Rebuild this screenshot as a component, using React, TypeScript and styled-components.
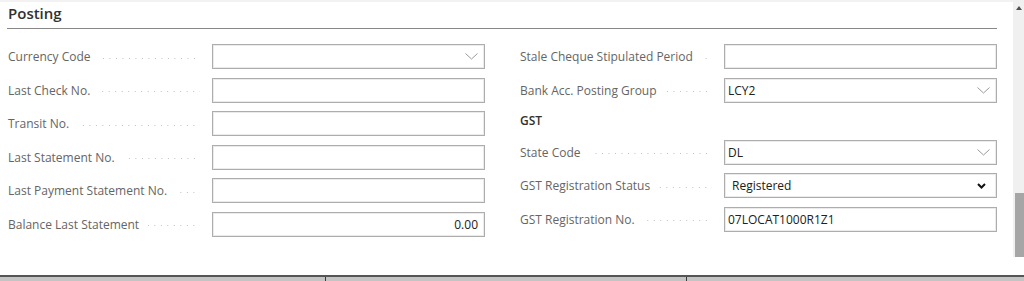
import React from 'react'
import styled, { createGlobalStyle } from 'styled-components'

type Field = {
  label: string
  value?: string
  kind?: 'text' | 'lookup' | 'select'
  align?: 'left' | 'right'
}

const leftFields: Field[] = [
  { label: 'Currency Code', kind: 'lookup' },
  { label: 'Last Check No.' },
  { label: 'Transit No.' },
  { label: 'Last Statement No.' },
  { label: 'Last Payment Statement No.' },
  { label: 'Balance Last Statement', value: '0.00', align: 'right' },
]

const rightTop: Field[] = [
  { label: 'Stale Cheque Stipulated Period' },
  { label: 'Bank Acc. Posting Group', value: 'LCY2', kind: 'lookup' },
]

const rightGst: Field[] = [
  { label: 'State Code', value: 'DL', kind: 'lookup' },
  { label: 'GST Registration Status', value: 'Registered', kind: 'select' },
  { label: 'GST Registration No.', value: '07LOCAT1000R1Z1' },
]

const GlobalStyle = createGlobalStyle`
  html, body {
    margin: 0;
    padding: 0;
    background: #ffffff;
  }
  body {
    font-family: "Open Sans", "Noto Sans", sans-serif;
    color: #323130;
  }
`

const LookupChevron = () => (
  <svg width="13" height="7" viewBox="0 0 13 7">
    <polyline points="0.5,0.5 6.5,6 12.5,0.5" fill="none" stroke="#9a9a9a" strokeWidth="1" />
  </svg>
)

const SelectChevron = () => (
  <svg width="9" height="6" viewBox="0 0 9 6">
    <polyline points="1,1 4.5,4.5 8,1" fill="none" stroke="#111" strokeWidth="2" />
  </svg>
)

const FieldRow = ({ field }: { field: Field }) => (
  <StyledRow>
    <StyledLabel>
      <span>{field.label}</span>
      <StyledLeader />
    </StyledLabel>
    <StyledInput $align={field.align} $select={field.kind === 'select'}>
      <StyledValue>{field.value}</StyledValue>
      {field.kind === 'lookup' && <LookupChevron />}
      {field.kind === 'select' && <SelectChevron />}
    </StyledInput>
  </StyledRow>
)

export default function App() {
  return (
    <>
      <GlobalStyle />
      <StyledPage>
        <StyledBody>
          <StyledContent>
            <StyledHeader>Posting</StyledHeader>
            <StyledColumns>
              <StyledColumn>
                {leftFields.map((f) => (
                  <FieldRow key={f.label} field={f} />
                ))}
              </StyledColumn>
              <StyledColumn>
                {rightTop.map((f) => (
                  <FieldRow key={f.label} field={f} />
                ))}
                <StyledGroupTitle>GST</StyledGroupTitle>
                {rightGst.map((f) => (
                  <FieldRow key={f.label} field={f} />
                ))}
              </StyledColumn>
            </StyledColumns>
          </StyledContent>
          <StyledScrollArea>
            <StyledTrack>
              <StyledArrow />
              <StyledThumb />
            </StyledTrack>
          </StyledScrollArea>
        </StyledBody>
        <StyledFooter>
          <StyledFooterCell $width={325} />
          <StyledFooterCell $width={360} />
          <StyledFooterCell />
        </StyledFooter>
      </StyledPage>
    </>
  )
}

const StyledPage = styled.div`
  display: flex;
  flex-direction: column;
  width: 1024px;
  height: 281px;
  overflow: hidden;
`
const StyledBody = styled.div`
  display: flex;
  height: 275px;
`
const StyledContent = styled.div`
  flex: 1;
  border-top: 2px solid #f2f2f2;
  padding: 0 16px 0 7px;
`
const StyledHeader = styled.div`
  height: 26px;
  padding-left: 1px;
  border-bottom: 1px solid #8a8886;
  font-size: 15px;
  font-weight: 600;
  line-height: 23px;
  color: #323130;
`
const StyledColumns = styled.div`
  display: grid;
  grid-template-columns: 477px 477px;
  column-gap: 35px;
  padding: 15px 0 0 1px;
`
const StyledColumn = styled.div`
  display: flex;
  flex-direction: column;
  gap: 8.6px;
`
const StyledRow = styled.div`
  display: grid;
  grid-template-columns: 204px 1fr;
  height: 25px;
  align-items: center;
`
const StyledLabel = styled.div`
  display: flex;
  align-items: center;
  padding-right: 12px;
  font-size: 12px;
  color: #656565;
  white-space: nowrap;
`
const StyledLeader = styled.span`
  flex: 1;
  height: 1px;
  margin: 3px 0 0 9px;
  background-image: linear-gradient(to right, #bdbdbd 1px, transparent 1px);
  background-size: 6.5px 1px;
  background-repeat: repeat-x;
  background-position: right center;
`
const StyledInput = styled.div<{ $align?: 'left' | 'right'; $select?: boolean }>`
  display: flex;
  align-items: center;
  gap: 6px;
  height: 25px;
  box-sizing: border-box;
  border: 1px solid #adadad;
  box-shadow: inset 0 0 0 1px #ebebeb;
  padding: 0 ${({ $select }) => ($select ? '10px' : '6px')} 0 ${({ $select }) => ($select ? '7px' : '3px')};
  text-align: ${({ $align }) => $align ?? 'left'};
  font-size: 12px;
  color: #212121;
`
const StyledValue = styled.span`
  flex: 1;
  white-space: nowrap;
`
const StyledGroupTitle = styled.div`
  height: 20px;
  line-height: 20px;
  font-size: 12px;
  font-weight: 600;
  color: #323130;
`
const StyledScrollArea = styled.div`
  width: 11px;
`
const StyledTrack = styled.div`
  position: relative;
  height: 257px;
  background: #f0f0f0;
`
const StyledArrow = styled.div`
  position: absolute;
  top: 6px;
  left: 3px;
  width: 0;
  height: 0;
  border-left: 3px solid transparent;
  border-right: 3px solid transparent;
  border-bottom: 4px solid #505050;
`
const StyledThumb = styled.div`
  position: absolute;
  left: 2px;
  right: 0;
  top: 193px;
  bottom: 0;
  background: #a6a6a6;
`
const StyledFooter = styled.div`
  display: flex;
  flex: 1;
  border-top: 2px solid #555555;
  background: #c4c4c4;
`
const StyledFooterCell = styled.div<{ $width?: number }>`
  flex: ${({ $width }) => ($width ? `0 0 ${$width}px` : '1')};
  & + & {
    border-left: 1px solid #3a3a3a;
  }
`
